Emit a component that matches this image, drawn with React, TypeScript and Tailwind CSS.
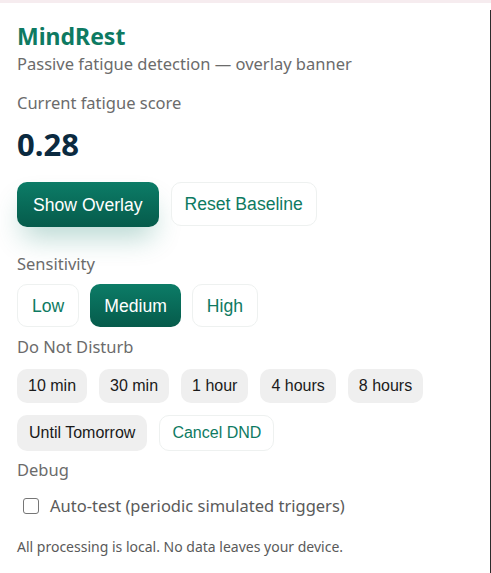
import React, { useState } from "react";

const sans = "font-['Segoe_UI','Noto_Sans',sans-serif]";
const arial = "font-['Liberation_Sans',Arial,sans-serif]";

// big buttons use 1.1em, DND chips stay at 16px
const bigBtn = `${arial} text-[17.6px] leading-[20px] rounded-[10px]`;
const chip = `${arial} text-[16px] leading-[18px] rounded-[10px]`;

function Label({ children }: { children: React.ReactNode }) {
  return <div className="text-[16.5px] leading-[22px] text-[#6b6b6b]">{children}</div>;
}

export default function App() {
  const [level, setLevel] = useState("Medium");
  const [auto, setAuto] = useState(false);

  return (
    <div className={`relative min-h-[573px] w-[491px] bg-white ${sans}`}>
      {/* pale strip from the host page */}
      <div className="h-[3px] bg-[#f6ecef]" />
      <div className="absolute right-0 top-[10px] bottom-0 w-px bg-[#2b2b2b]" />

      <div className="pl-[17px] pr-4 pt-[16px]">
        <h1 className="text-[23px] font-bold leading-[34px] text-[#0e7a62]">MindRest</h1>
        <p className="text-[16.5px] leading-[22px] text-[#6b6b6b]">
          Passive fatigue detection — overlay banner
        </p>

        <div className="mt-[17px]">
          <Label>Current fatigue score</Label>
        </div>
        <div className="mt-[11px] text-[31px] font-bold leading-[38px] text-[#0b2a40]">0.28</div>

        <div className="mt-[19px] flex gap-3">
          <button
            className={`${bigBtn} h-[45px] bg-gradient-to-b from-[#0c7c67] to-[#065b4b] px-[16px] text-white shadow-[0_16px_28px_-6px_rgba(10,120,100,0.3)]`}
          >
            Show Overlay
          </button>
          <button
            className={`${bigBtn} h-[44px] border border-[#eef1f0] bg-white px-[13px] text-[#0e7a62]`}
          >
            Reset Baseline
          </button>
        </div>

        <div className="mt-[26px]">
          <Label>Sensitivity</Label>
        </div>
        <div className="mt-[9px] flex gap-[11px]">
          {["Low", "Medium", "High"].map((l) =>
            l === level ? (
              <button
                key={l}
                onClick={() => setLevel(l)}
                className={`${bigBtn} h-[43px] bg-gradient-to-b from-[#0c7c67] to-[#065b4b] px-[14px] text-white`}
              >
                {l}
              </button>
            ) : (
              <button
                key={l}
                onClick={() => setLevel(l)}
                className={`${bigBtn} h-[43px] border border-[#eef1f0] bg-white px-[14px] text-[#0e7a62]`}
              >
                {l}
              </button>
            )
          )}
        </div>

        <div className="mt-[9px]">
          <Label>Do Not Disturb</Label>
        </div>
        <div className="mt-[11px] flex flex-wrap gap-x-[12px] gap-y-3">
          {["10 min", "30 min", "1 hour", "4 hours", "8 hours"].map((d) => (
            <button key={d} className={`${chip} h-[34px] bg-[#efefef] px-[11px] text-[#1a1a1a]`}>
              {d}
            </button>
          ))}
          <button className={`${chip} h-[36px] bg-[#efefef] px-[12px] text-[#1a1a1a]`}>
            Until Tomorrow
          </button>
          <button
            className={`${chip} h-[36px] border border-[#eef1f0] bg-white px-[12px] text-[#0e7a62]`}
          >
            Cancel DND
          </button>
        </div>

        <div className="mt-[8px]">
          <Label>Debug</Label>
        </div>
        <label className="mt-[14px] flex items-center gap-[11px] pl-[6px] text-[16.5px] leading-[22px] text-[#5a5a5a]">
          <span
            onClick={() => setAuto(!auto)}
            className={`flex h-[16px] w-[16px] items-center justify-center rounded-[3px] border border-[#767676] ${
              auto ? "bg-[#0e7a62]" : "bg-white"
            }`}
          />
          Auto-test (periodic simulated triggers)
        </label>

        <p className="mt-[20px] text-[14px] leading-[20px] text-[#5a5a5a]">
          All processing is local. No data leaves your device.
        </p>
      </div>
    </div>
  );
}
